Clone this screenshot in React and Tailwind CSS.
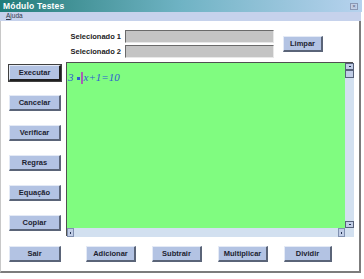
import React from "react";

const font = { fontFamily: '"Liberation Sans", Arial, sans-serif' };

function Btn({ children, w = "w-[52px]", def = false }) {
  return (
    <div
      className={`${w} h-[16px] flex items-center justify-center bg-[#b3c3e3] border-t border-l border-t-[#e4eaf6] border-l-[#e4eaf6] ${
        def ? "border-r-2 border-b-2 border-r-[#202020] border-b-[#202020] outline outline-1 outline-[#404040]" : "border-r-2 border-b-2 border-r-[#5a6478] border-b-[#5a6478]"
      } text-[7.5px] font-bold text-[#1c2230] leading-none`}
    >
      {children}
    </div>
  );
}

export default function App() {
  return (
    <div className="w-[364px] h-[279px] bg-white flex flex-col overflow-hidden" style={font}>
      {/* title bar */}
      <div className="h-[12px] w-[362px] flex items-center justify-between bg-gradient-to-r from-[#1f7d7a] via-[#6fb3c4] to-[#b6d2ee] pl-[3px] pr-[4px]">
        <span className="text-[8.5px] font-bold text-white leading-none tracking-[0.2px]">Módulo Testes</span>
        <div className="w-[8px] h-[7px] bg-[#c2cfe6] border border-[#8a98b4] flex items-center justify-center text-[6px] leading-none text-[#55607a]">×</div>
      </div>
      {/* menu */}
      <div className="h-[9px] bg-[#c6d2ec] flex items-center pl-[6px] w-[361px]">
        <span className="text-[6.5px] text-[#303848] leading-none">
          <span className="underline">A</span>juda
        </span>
      </div>
      {/* client */}
      <div className="h-[252px] w-[361px] border-l border-l-[#c8c8c8] border-r-2 border-r-[#7c7c7c] border-b-2 border-b-[#7c7c7c] pl-[2px] flex flex-col">
        {/* top row */}
        <div className="flex items-center pt-[9px]">
          <div className="w-[118px] flex flex-col items-end gap-[2px] text-[7.5px] font-bold text-[#1c1c1c]">
            <div className="h-[13px] flex items-center">Selecionado 1</div>
            <div className="h-[13px] flex items-center">Selecionado 2</div>
          </div>
          <div className="ml-[4px] flex flex-col gap-[2px]">
            <div className="w-[149px] h-[13px] bg-[#c4c4c4] border border-t-[#6a6a6a] border-l-[#6a6a6a] border-r-[#e8e8e8] border-b-[#e8e8e8]" />
            <div className="w-[149px] h-[13px] bg-[#c4c4c4] border border-t-[#6a6a6a] border-l-[#6a6a6a] border-r-[#e8e8e8] border-b-[#e8e8e8]" />
          </div>
          <div className="ml-[9px]">
            <Btn w="w-[40px]">Limpar</Btn>
          </div>
        </div>
        {/* middle */}
        <div className="flex mt-[4px]">
          <div className="ml-[6px] w-[52px] pt-[3px] flex flex-col gap-[14px]">
            <Btn def>Executar</Btn>
            <Btn>Cancelar</Btn>
            <Btn>Verificar</Btn>
            <Btn>Regras</Btn>
            <Btn>Equação</Btn>
            <Btn>Copiar</Btn>
          </div>
          <div className="ml-[5px] w-[287px] h-[174px] grid grid-cols-[278px_9px] grid-rows-[165px_9px] border-t border-l border-[#505050]">
            <div className="bg-[#80fc80] pl-[1px] pt-[1px]">
              <span
                className="italic text-[11px] text-[#2e5fd0] leading-none"
                style={{ fontFamily: '"Liberation Serif", "Times New Roman", serif' }}
              >
                3
                <span className="inline-block w-[3px] h-[3px] bg-[#2e5fd0] align-middle ml-[3px] mr-[1px]" />
                <span className="inline-block w-[2px] h-[12px] bg-[#a860b0] align-middle mr-[1px]" />x+1=10
              </span>
            </div>
            <div className="bg-[#d2e0f0] flex flex-col justify-between">
              <div>
                <div className="h-[7px] bg-[#c0cde6] border border-[#56617a] flex items-center justify-center">
                  <div className="w-[2px] h-[1px] bg-[#203050]" />
                </div>
                <div className="h-[8px] bg-[#c0cde6] border border-[#56617a]" />
              </div>
              <div className="h-[7px] bg-[#c0cde6] border border-[#56617a] flex items-center justify-center">
                <div className="w-[2px] h-[1px] bg-[#203050]" />
              </div>
            </div>
            <div className="bg-[#d2e0f0] flex justify-between">
              <div className="w-[7px] bg-[#c0cde6] border border-[#8090b0] flex items-center justify-center">
                <div className="w-[1px] h-[2px] bg-[#203050]" />
              </div>
              <div className="w-[7px] bg-[#c0cde6] border border-[#8090b0] flex items-center justify-center">
                <div className="w-[1px] h-[2px] bg-[#203050]" />
              </div>
            </div>
            <div className="bg-[#d2e0f0]" />
          </div>
        </div>
        {/* bottom */}
        <div className="flex mt-[10px] ml-[6px]">
          <Btn w="w-[52px]">Sair</Btn>
          <div className="ml-[25px]"><Btn w="w-[50px]">Adicionar</Btn></div>
          <div className="ml-[16px]"><Btn w="w-[50px]">Subtrair</Btn></div>
          <div className="ml-[16px]"><Btn w="w-[50px]">Multiplicar</Btn></div>
          <div className="ml-[16px]"><Btn w="w-[48px]">Dividir</Btn></div>
        </div>
      </div>
    </div>
  );
}
